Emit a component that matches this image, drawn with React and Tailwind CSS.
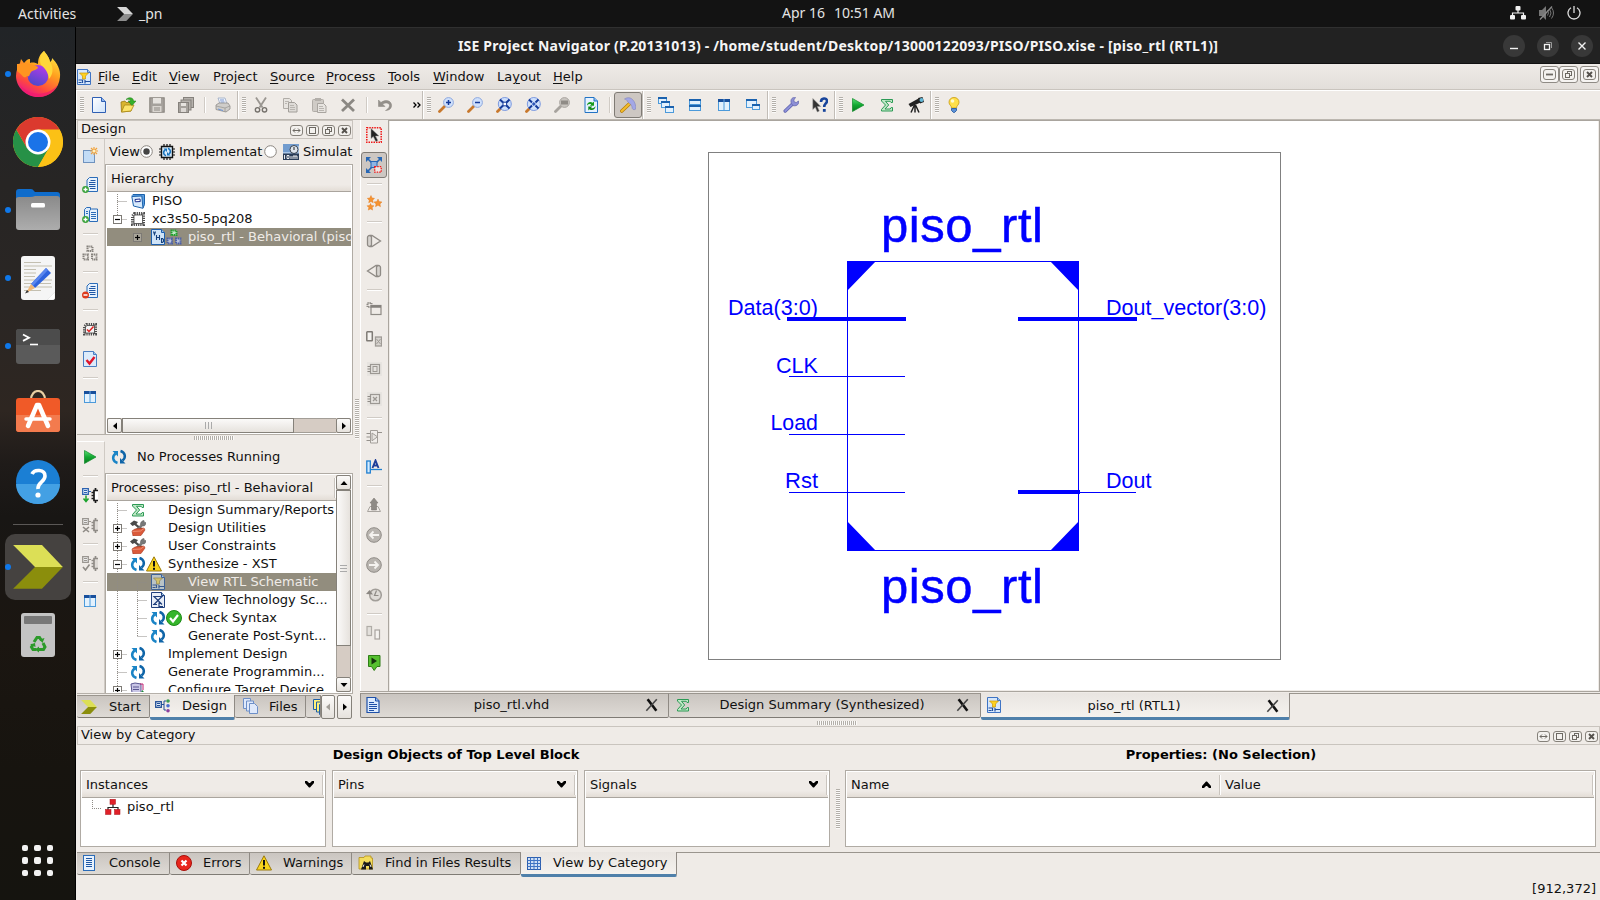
import React from "react";

/* ---------- small drawing helpers ---------- */
const I = ({ children, s = 16, className = "" }) => (
  <svg width={s} height={s} viewBox="0 0 16 16" className={"block shrink-0 " + className} fill="none">{children}</svg>
);

const Page = ({ children, stroke = "#3465a4", fill = "#dcebfb", fold = "#9ec3ea" }) => (
  <I>
    <path d="M1.5.5h10l3 3v12h-13z" fill={fill} stroke={stroke} />
    <path d="M11.5.5v3h3" fill={fold} stroke={stroke} />
    {children}
  </I>
);

const SchematicIcon = ({ dim, plain }) => (
  <Page stroke={dim ? "#3e6296" : plain ? "#1f3f7d" : "#3f74c4"} fill={dim ? "#b9c3c6" : plain ? "#e8eef8" : "#d6e7fb"}>
    {plain ? (
      <path d="M4 4.500h8l-4 4zM8 8.500l-4 4h3M8 8.500l4 4M3 12.500h4M9 10.500v4h4" stroke="#1f3f7d" strokeWidth="1.200" fill="none" />
    ) : (
      <g>
        <path d="M8 8v2.500M2.500 11h4v3M2.500 13.500h3M9 11v3.500M9 12.500h5" stroke={dim ? "#38598f" : "#1f4fa0"} strokeWidth="1.200" />
        <path d="M3.500 4h9L9.500 7v3h-3V7z" fill={dim ? "#d3c26a" : "#ffd21f"} stroke={dim ? "#8f8450" : "#c9950c"} strokeWidth=".7" />
      </g>
    )}
  </Page>
);

const NewFile = () => (
  <I><path d="M1.500.5h9l4 4v11h-13z" fill="url(#gnew)" stroke="#2f5fb3" /><path d="M10.500.5v4h4" fill="#8fb6ee" stroke="#2f5fb3" />
    <defs><linearGradient id="gnew" x1="0" y1="0" x2="1" y2="1"><stop offset="0" stopColor="#fff" /><stop offset="1" stopColor="#cfe3fb" /></linearGradient></defs></I>
);
const OpenFolder = () => (
  <I><path d="M1 5l4-1 1 1.500h5v8.500l-9.500 1z" fill="#d9b530" stroke="#9a7a12" strokeWidth=".8" /><path d="M1.500 15l3-7h9.500l-3 6z" fill="#fbe36b" stroke="#a98614" strokeWidth=".8" />
    <path d="M6 2.500C9-.5 13.500.500 13.500 4H16l-4 4.500L8 4h2.500C10.500 2.500 8.500 1.800 6 2.500z" fill="#35b02b" stroke="#1c7a16" strokeWidth=".5" /></I>
);
const Save = () => (
  <I><rect x=".8" y=".8" width="14.400" height="14.400" fill="#a5a19c" stroke="#85817c" /><rect x="4" y="1" width="8" height="5.500" fill="#e6e3df" /><rect x="3.500" y="9" width="9" height="6" fill="#d9d5d0" /><path d="M5 11h6M5 13h6" stroke="#8d8984" /></I>
);
const SaveAll = () => (
  <I><g stroke="#85817c"><rect x="5.500" y=".5" width="10" height="10" fill="#b5b1ac" /><rect x="3" y="3" width="10" height="10" fill="#b5b1ac" /><rect x=".5" y="5.500" width="10" height="10" fill="#a5a19c" /></g><rect x="3" y="6" width="5" height="3" fill="#e6e3df" /><rect x="3" y="11" width="5" height="4" fill="#dcd8d4" /></I>
);
const Printer = () => (
  <I><path d="M3 1h7l2 6H5z" fill="#eef3fb" stroke="#9aa9c4" strokeWidth=".8" /><path d="M5 3h4M5.500 5h4" stroke="#7d97d0" /><path d="M1 8l3-2h9l2 3v3l-4 3-10-2.500z" fill="#cfcdca" stroke="#8f8d8a" strokeWidth=".8" /><path d="M1 9l9 2 5-2M10 11v4" stroke="#9c9a97" strokeWidth=".8" /><path d="M3 12l5 1.500" stroke="#6f97d8" /></I>
);
const Cut = () => (
  <I><path d="M3 .5l6.500 10M13 .5L6.500 10.500" stroke="#9a9691" strokeWidth="1.800" /><circle cx="4.500" cy="12.800" r="2.200" stroke="#75716c" strokeWidth="1.400" /><circle cx="11.500" cy="12.800" r="2.200" stroke="#75716c" strokeWidth="1.400" /></I>
);
const Copy = () => (
  <I><path d="M1.500 1.500h6l2 2v8h-8z" fill="#e7e4e0" stroke="#b0aca7" /><path d="M6.500 5.500h6l2.500 2.500v7h-8.500z" fill="#dedbd7" stroke="#a29e99" /><path d="M3 4.500h4M3 6.500h2M8 8.500h4M8 10.500h5M8 12.500h5" stroke="#b9b5b0" /></I>
);
const Paste = () => (
  <I><rect x="1.500" y="2.500" width="11" height="12" rx="1" fill="#cfcbc6" stroke="#b0aca7" /><rect x="4" y="1" width="6" height="3" fill="#b3afaa" /><path d="M6.500 6.500h6l2.500 2.500v6.500h-8.500z" fill="#e7e4e0" stroke="#a9a5a0" /><path d="M8 9.500h4M8 11.500h5M8 13.500h5" stroke="#b9b5b0" /></I>
);
const Del = () => <I><path d="M2 2.500L14 14M14 2.500L2 14" stroke="#8b8883" strokeWidth="2.800" /></I>;
const Undo = () => <I><path d="M1.500 3v6.500h6.500L5.500 7C9 5 12.500 6 12.500 8.500S10 12.500 8.500 13.500c4.500 0 6.500-3 6-6C13.500 3 8 2.500 4 5.500z" fill="#94908b" stroke="#86827d" strokeWidth=".5" /></I>;

const Lens = ({ children, grey }) => (
  <I><path d="M1.500 14.500L7 9" stroke={grey ? "#a7a39e" : "#c8782c"} strokeWidth="2.800" strokeLinecap="round" /><circle cx="10.500" cy="5.500" r="4.900" fill={grey ? "#c9c5c0" : "#cfe0fb"} stroke={grey ? "#aaa6a1" : "#8fa8dc"} />{children}</I>
);
const LensFit = ({ sel }) => (
  <I><path d="M1.500 14.500l3.500-3.500" stroke="#c8782c" strokeWidth="2.800" strokeLinecap="round" /><circle cx="8.800" cy="7" r="6.500" fill="#cfe0fb" stroke="#7d9ae0" />
    <path d="M4 2.500l3 3M13.500 2.500l-3 3M4 11.500l3-3M13.500 11.500l-3-3" stroke="#143a9a" strokeWidth="2" />{sel ? <path d="M8.800 5l2 2-2 2-2-2z" fill="#2e57b8" /> : <rect x="7" y="5.200" width="3.600" height="3.600" fill="#fff" stroke="#143a9a" />}</I>
);
const Refresh = () => (
  <I><path d="M2 .5h9l3.500 3.500v11.500H2z" fill="#e6f2ff" stroke="#2273c4" /><path d="M11 .5V4h3.500" fill="#8cbcf0" stroke="#2273c4" /><path d="M4 8.500C4 5 7.500 4 9.800 5.800L11 4.600v4.200H6.800L8.200 7.400C6.800 6.700 5.500 7 4 8.500z" fill="#159a1c" /><path d="M12.500 8.500c0 3.500-3.500 4.500-5.800 2.700l-1.200 1.200V8.200" fill="none" /><path d="M12.500 9c0 4-4 5-6 3.200L5.300 13.400V9.600h4L8 10.900c1.500.8 3.200.2 4.500-1.900z" fill="#0f8a17" /></I>
);
const Hammer = () => (
  <I><path d="M1.800 14l8-7.500" stroke="#b57c0a" strokeWidth="3.600" strokeLinecap="round" /><path d="M1.800 14l8-7.500" stroke="#f2bd2c" strokeWidth="2.200" strokeLinecap="round" /><path d="M4.500 2c3-2 6-1.500 8 .5 2.500 2.500 3.500 6 3.300 9.500-1.500 1-2.800.8-3.500-.5-.3-2.500-1-4-2.800-5L7.500 4.500C7 3 6 2.500 4.500 2z" fill="#a3a7e6" stroke="#7f83bd" strokeWidth=".6" /></I>
);
const Win = ({ x, y, w, h }) => (
  <g><rect x={x + 0.5} y={y + 0.5} width={w - 1} height={h - 1} fill="#e3f1fd" stroke="#4c9ada" /><rect x={x} y={y} width={w} height="2" fill="#1b62ae" /></g>
);
const Cascade = () => <I><Win x={0} y={0} w={9} h={7} /><Win x={3} y={4} w={9} h={7} /><Win x={7} y={9} w={9} h={7} /></I>;
const TileH = () => <I><Win x={2} y={2} w={12} h={6} /><Win x={2} y={8} w={12} h={6} /></I>;
const TileV = () => (
  <I><rect x="2.500" y="2.500" width="11" height="11" fill="#e3f1fd" stroke="#4c9ada" /><path d="M8 4v10" stroke="#4c9ada" /><rect x="2" y="2" width="12" height="3" fill="#174f9c" /><path d="M8 2v3" stroke="#6fa8e0" /></I>
);
const WinPair = () => <I><Win x={1} y={2} w={11} h={9} /><Win x={7} y={7} w={8} h={6} /></I>;
const Wrench = () => <I><path d="M2.200 14l6.800-6.500" stroke="#6064ae" strokeWidth="3.400" strokeLinecap="round" /><path d="M2.200 14l6.800-6.500" stroke="#8f92da" strokeWidth="1.800" strokeLinecap="round" /><path d="M8 5c-.5-3 1.500-5 4.500-4.500L10.800 3l.5 2 2 .5L15.500 4c.8 3-1.500 5-4.500 4.800C9.500 8.800 8.200 7 8 5z" fill="#8d8fd6" stroke="#5f62a8" strokeWidth=".7" /></I>;
const HelpArrow = () => (
  <I><path d="M.8 1.500v11l2.500-2.300 2 4.800 2-1-2-4.500h3.500z" fill="#333" stroke="#999" strokeWidth=".5" /><path d="M9 5c0-4.500 6-4.500 6-1 0 2.500-2.800 2.500-2.800 6" stroke="#17449b" strokeWidth="2.600" /><rect x="10.900" y="12" width="2.800" height="2.800" fill="#17449b" /></I>
);
const Play = () => (
  <I><path d="M2.500 1.500L14 8 2.500 14.500z" fill="url(#gplay)" stroke="#0b8a26" strokeWidth=".7" /><defs><linearGradient id="gplay" x1="0" y1="0" x2="0" y2="1"><stop offset="0" stopColor="#5be074" /><stop offset=".5" stopColor="#12a832" /><stop offset="1" stopColor="#067a1d" /></linearGradient></defs></I>
);
const Sigma = () => <I><path d="M2.500 2.500h11v3h-1.500l-.8-1.200H6.500L9.700 8l-3.700 4h5.200l1-1.500h1.300v3.500h-11v-1.500L6.500 8 2.500 4z" fill="#bfe8c6" stroke="#2c9a55" /></I>;
const Telescope = () => (
  <I><path d="M.5 7l10-5.500 2 4-10 4.500z" fill="#222" /><path d="M10 1l4.500-1 1.500 5-4 1.500z" fill="#1c1c1c" /><circle cx="13.500" cy="3" r="2" fill="#63b8d8" /><path d="M6.500 8L3 15.500M7 8v7.500M7.500 8l3.500 7.500" stroke="#222" strokeWidth="1.500" /></I>
);
const Bulb = () => (
  <I><path d="M8 .5c-3 0-5 2-5 4.800C3 8 5.500 8.500 5.500 11h5C10.500 8.500 13 8 13 5.300 13 2.500 11 .5 8 .5z" fill="#ffe04a" stroke="#c89a12" strokeWidth=".8" /><circle cx="6.500" cy="4" r="1.800" fill="#fffbd0" /><path d="M5.500 11.500h5v2l-2 2h-1l-2-2z" fill="#5c90d6" stroke="#3465a4" strokeWidth="1" /></I>
);

/* side bars */
const NewSource = () => (
  <I><rect x="1.500" y="3.500" width="11" height="12" fill="#c3dcf6" stroke="#6f92be" /><path d="M12 0v8M8 4h8M9 1l6 6M15 1L9 7" stroke="#f0a23c" strokeWidth="1.200" /><circle cx="12" cy="4" r="1.500" fill="#fff1c2" /></I>
);
const DocLines = () => (
  <g><path d="M7.500.5h8v14h-10.500v-11.500z" fill="#e8f2fd" stroke="#2b6cb8" /><path d="M8.500 3.500h5M7 5.500h6.500M7 7.500h6.500M7 9.500h6.500M8 11.500h5.500" stroke="#1f57a5" /></g>
);
const Plus = () => <g><circle cx="3.500" cy="12.500" r="3.400" fill="#3aa23b" /><path d="M3.500 10.500v4M1.500 12.500h4" stroke="#fff" strokeWidth="1.300" /></g>;
const AddSource = () => <I><DocLines /><Plus /></I>;
const AddCopy = () => <I><path d="M2.500 2.500l2-2h4v13h-6z" fill="#dbeafb" stroke="#2b6cb8" /><path d="M7.500 3.500l2-1.500h6v12.500h-8z" fill="#e8f2fd" stroke="#2b6cb8" /><path d="M9 5.500h5M9 7.500h5M9 9.500h5M9 11.500h5M4 4.500h2M4 6.500h2" stroke="#2b6cb8" /><Plus /></I>;
const RemoveDoc = () => <I><DocLines /><circle cx="3.500" cy="12" r="3.500" fill="#dd3a1c" /><path d="M1.500 12h4" stroke="#fff" strokeWidth="1.500" /></I>;
const Chips = ({ top = "#85817c", low = "#85817c", fillTop = "none", fillLow = "none" }) => (
  <I><g strokeWidth="2" strokeDasharray="1.200 .6"><rect x="5.500" y="1.500" width="5" height="4.500" stroke={top} fill={fillTop} /><rect x="1.500" y="9.500" width="4.500" height="5" stroke={low} fill={fillLow} /><rect x="10" y="9.500" width="4.500" height="5" stroke={low} fill={fillLow} /></g></I>
);
const ChipCheck = () => <I><path d="M4.500 3.500h9v9.500h-11V5.500z" fill="#e8e5e1" stroke="#4c4c4c" strokeWidth="3" strokeDasharray="1.200 1" /><path d="M5 4.500h7.500V12H3.500V6z" fill="#f4f4f4" stroke="#444" strokeWidth=".8" /><path d="M5 8.500l2 2 4.500-5" stroke="#e02020" strokeWidth="1.500" /></I>;
const PageCheck = () => <Page stroke="#4a7ec2"><path d="M4.500 9l3 3.500L12.500 6" stroke="#e0152b" strokeWidth="2.400" /></Page>;
const ProcChip = ({ mark, grey }) => {
  const a = grey ? "#9a9691" : "#2c62b0", b = grey ? "#8f8b86" : "#1c1c1c";
  return <I><path d="M.7 1.700h5.600v5.600H.7z" stroke={a} strokeWidth="1.300" fill={grey ? "#eee" : "#e8f2fd"} /><path d="M2 3.500h3M2 5.500h3M6.500 4.500H9" stroke={a} /><path d="M12.500 4h3.500v9h-3.500z" fill={grey ? "#dedad6" : "#fff"} /><path d="M16 3.500h-4v10h4M13.500 1v2M13.500 14v2M12 5.500H9.500M12 8.500H9.500M12 11.500H9.500" stroke={b} strokeWidth="1.700" />
    {mark === "down" && <path d="M4 8.500v6M1.500 11.500L4 14.500l2.500-3" stroke="#1ba32c" strokeWidth="1.500" />}
    {mark === "x" && <path d="M1 10l6 5M7 10l-6 5" stroke="#8f8b86" strokeWidth="1.600" />}
    {mark === "v" && <path d="M1 12l2.500 3L7.500 9.500" stroke="#8f8b86" strokeWidth="1.600" />}</I>;
};
const PointerSel = () => <I><rect x=".8" y=".8" width="14.400" height="14.400" stroke="#f01818" strokeWidth="1.500" strokeDasharray="1.500 1" /><path d="M5 1.500v10l2.300-2 2.500 5 2-1L9.500 9h3.500z" fill="#222" stroke="#999" strokeWidth=".5" /></I>;
const ZoomBox = () => <I><path d="M2 2l12 12M14 2L2 14" stroke="#2767b5" strokeWidth="1.600" /><path d="M0 0h5L0 5zM16 0h-5l5 5zM0 16h5l-5-5z" fill="#2767b5" /><rect x="5" y="4.500" width="6" height="6" fill="#8db4e4" stroke="#2767b5" /><rect x="8.700" y="9.700" width="6.500" height="5.500" fill="#efe7e4" stroke="#f01818" strokeWidth="1.300" strokeDasharray="1.500 1" /></I>;
const Stars = () => <I><g fill="#f59331" stroke="#e07414" strokeWidth=".4"><path d="M5 .5l1 2.500 2.500.3L6.700 5.200l.5 2.600L5 6.500 2.700 7.800l.5-2.600L1.300 3.300 3.800 3z" /><path d="M12 4l1.200 2.600 2.800.3-2 2 .5 2.800-2.500-1.400-2.500 1.400.5-2.800-2-2 2.800-.3z" /><path d="M4.500 8.500l1 2 2.500.3-1.800 1.800.4 2.500-2.100-1.200-2.200 1.200.5-2.500L1 10.800l2.500-.3z" /></g></I>;
const Cone = ({ flip }) => <I className={flip ? "-scale-x-100" : ""}><rect x="1.500" y="2.500" width="4" height="11" rx="2" fill="#d6d3cf" stroke="#8f8b86" strokeWidth="1.300" /><path d="M4 2.500h2L14.500 8 6 13.500H4" stroke="#8f8b86" strokeWidth="1.300" /></I>;
const GWin = () => <I><path d="M1.500 2h4v4h-4z" stroke="#8f8b86" strokeDasharray="1.200 .8" strokeWidth="2" /><rect x="5" y="4.500" width="10" height="9" fill="#efebe7" stroke="#8f8b86" strokeWidth="1.200" /><path d="M5 5.500h10" stroke="#85817c" strokeWidth="2.500" /></I>;
const GPair = () => <I><rect x=".8" y=".8" width="5.500" height="9" rx=".5" fill="#f5f3f0" stroke="#7f7b76" strokeWidth="1.500" /><rect x="9.500" y="6" width="6" height="9" fill="#d8d4d0" stroke="#9f9b96" strokeWidth="1.300" /><path d="M10.500 8l4 5M14.500 8l-4 5" stroke="#9f9b96" /></I>;
const GChip = ({ x }) => <I><rect x="1" y="1" width="15" height="14" fill="#e7e4e0" /><rect x="4.500" y="3.500" width="9" height="9" stroke="#9c9893" strokeWidth="1.200" /><path d="M1.500 5.500h3M1.500 8h3M1.500 10.500h3" stroke="#8f8b86" />{x ? <path d="M7 6l4 4M11 6l-4 4" stroke="#9c9893" strokeWidth="1.300" /> : <rect x="7" y="5.500" width="4" height="5" stroke="#9c9893" />}</I>;
const GGate = () => <I><path d="M4.500 1.500h7v12.500h-7z" stroke="#a29e99" fill="#f1eeeb" /><path d="M6 4l5.500 3.800-5.500 4z" stroke="#a29e99" fill="#e6e3df" /><path d="M.5 4.500h3.500M.5 8h3.500M.5 11.500h3.500M11.500 3.500H16" stroke="#95918c" strokeWidth="1.200" /></I>;
const AFrame = () => <I><rect x=".8" y="2" width="3.500" height="12" fill="#d5ecff" stroke="#1f7fd0" strokeWidth="1.300" /><path d="M4.500 10.500H16" stroke="#1f7fd0" strokeWidth="1.300" /><path d="M6.500 9L9.500 1.500 12.500 9M7.500 6.500h4" stroke="#1f3f99" strokeWidth="1.900" /></I>;
const GUp = () => <I><path d="M4 9.500l-2.500 5h13l-2.500-5z" stroke="#a8a49f" /><path d="M8 1l4 5h-1.500v7h-5V6H4z" fill="#8f8b86" stroke="#7f7b76" strokeWidth=".6" /></I>;
const GArrow = ({ flip }) => <I className={flip ? "-scale-x-100" : ""}><circle cx="8" cy="8" r="7.300" fill="#b9b5b0" stroke="#8f8b86" /><path d="M13 8H4M7.500 4.500L4 8l3.500 3.500" stroke="#f5f3f0" strokeWidth="1.800" /></I>;
const GHist = () => <I><circle cx="9.500" cy="8" r="5.800" fill="#dedbd7" stroke="#a29e99" strokeWidth="1.500" /><path d="M10.500 3.500L8.500 8.500h4" stroke="#8f8b86" strokeWidth="1.200" /><path d="M0 7l3.500-4L7 7.500z" fill="#8b8782" /></I>;
const GTwo = () => <I><rect x="1" y="1.500" width="4.500" height="9" fill="#e3e0dc" stroke="#b0aca7" strokeWidth="1.200" /><rect x="9" y="5" width="4.500" height="9" fill="#f5f3f0" stroke="#a8a49f" strokeWidth="1.200" /></I>;
const GreenTag = () => <I><path d="M2.500.5h11.500v11h-3l-2.800 4-2.700-4h-3z" fill="#56c02f" stroke="#2f7d17" /><path d="M5.500 2.500v7L11 6z" fill="#15330d" /></I>;

/* tree icons */
const Cycle = () => (
  <I><path d="M6.500 14C1.500 12.500.8 7.500 4.500 4.500" stroke="#1a84c6" strokeWidth="2.500" /><path d="M1.500 2H7v5.500z" fill="#1a84c6" /><path d="M9.500 2C14.500 3.500 15.200 8.500 11.500 11.500" stroke="#0f65a8" strokeWidth="2.500" /><path d="M14.500 14.500H9V9z" fill="#0f65a8" /></I>
);
const Tools = () => <I><path d="M0 3.500L4 .5l4 1.500-1.500 2L13 9l-2 1.500L4.500 5 2.500 6z" fill="#4a4a4a" /><path d="M14 .5l.5 2h1.500c0 3-2 4-3.500 3.500L6 13l-2-2 6.500-6C10 3 11.500.5 14 .5z" fill="#777" stroke="#555" strokeWidth=".4" /><path d="M2 11l3-2 9-1 1 2-4 5.500-8 .5z" fill="#db5a3a" stroke="#a8361c" strokeWidth=".6" /><path d="M2.500 11.500l8-.5 3.500-2.500" stroke="#f09a80" strokeWidth=".8" /></I>;
const Warn = () => <I><path d="M8 .8L15.500 15H.5z" fill="#f9d31c" stroke="#9c7a0a" strokeLinejoin="round" /><path d="M8 5v5.500" stroke="#111" strokeWidth="2" /><rect x="7" y="11.800" width="2" height="2" fill="#111" /></I>;
const Ok = () => <I><circle cx="8" cy="8" r="7.500" fill="#35b52c" stroke="#1d8a17" /><path d="M4 8l3 3.500L12 5" stroke="#fff" strokeWidth="2.200" /></I>;
const Project = () => <I><path d="M2 2.500l1-1h11.500v10l-1.500 3.500" fill="#5a9de0" stroke="#1c62ab" /><path d="M1.800 3.500l10-.5 1.200 12.300-9.500-2.300z" fill="#d7eafc" stroke="#1c62ab" /><path d="M5 6.500l5-.5.3 2.500-5 .3z" fill="#fff" stroke="#1c2f8d" /></I>;
const ChipSm = () => <I><path d="M4.500 2.500h9v11h-11V5z" fill="#eee" stroke="#4c4c4c" strokeWidth="3" strokeDasharray="1.200 1" /><path d="M5 4h7.500v8.500H4V5.500z" fill="#fff" stroke="#444" strokeWidth=".8" /></I>;
const Vhd = () => <Page stroke="#1d5fae" fill="#cfe3f7"><path d="M3.500 2.500l1 3 1-3M6.500 6v5M9.500 6v5M6.500 8.500h3M11.500 9.500v4h1l1-1v-2l-1-1z" stroke="#15407c" strokeWidth="1.100" /></Page>;
const ConfDev = () => <I><path d="M1 2l4-1 6 1v9l-5 2-4-2z" fill="#c9c6e6" stroke="#5a5791" /><path d="M3 5h6M3 7.500h6" stroke="#5a5791" /><path d="M10 2h3v6" stroke="#c02070" /><path d="M12.500 8L16 13h-7z" fill="#1c8a3a" /></I>;
const ChipBlue = () => <I><path d="M2.500 2.500h11v11h-11z" fill="#d9ecfb" stroke="#111" strokeWidth="1.400" /><path d="M5 0v2M8 0v2M11 0v2M5 14v2M8 14v2M11 14v2M0 5h2M0 8h2M0 11h2M14 5h2M14 8h2M14 11h2" stroke="#111" strokeWidth="1.200" /><path d="M7 11.800C4 10.500 4 7.500 6 6M9 4.200c3 1.300 3 4.300 1 5.800" stroke="#1a74bd" strokeWidth="1.600" /><path d="M4.500 4.500h3.500v3.500zM11.500 11.500H8V8z" fill="#1a74bd" /></I>;
const SimIcon = () => (
  <svg width="16" height="16" viewBox="0 0 16 16" className="block shrink-0"><rect width="16" height="16" fill="#a9c6e8" /><path d="M0 1h16M0 3h8M0 5h8M0 7h8" stroke="#3a72b5" /><circle cx="11" cy="5.500" r="4" fill="#dfe6ee" stroke="#39424d" /><path d="M11 3v3" stroke="#222" /><rect y="9.500" width="16" height="6.500" fill="#2a3d58" /><path d="M1.500 11v4M4 11.500h2v3H4zM8 12v3M10 15v-3h2v3M12 12h2v3" stroke="#fff" fill="none" strokeWidth=".9" /></svg>
);
const Arrow3D = ({ s = 16, grey }) => (
  <svg width={s} height={s * 0.875} viewBox="0 0 50 44" className="block shrink-0"><path d="M0 0h29l21 22H22z" fill={grey ? "#d6d6d6" : "#dcdf56"} /><path d="M0 44h29l21-22H22z" fill={grey ? "#8d8d8d" : "#8b8e0c"} /></svg>
);
const DesignTab = () => <I><rect x=".7" y="3.700" width="5.600" height="5.600" fill="#e3eefb" stroke="#234f96" strokeWidth="1.300" /><path d="M2 5.500h3M2 7.500h3M6 6.500h3M9 3v9M9 3h2M9 12h2" stroke="#234f96" /><circle cx="13" cy="3" r="1.800" fill="#3c9a52" /><circle cx="13" cy="7.800" r="1.800" fill="#4a6fd0" /><circle cx="13" cy="12.700" r="1.800" fill="#8b3f9d" /></I>;
const FilesIcon = ({ y }) => <I><g fill={y ? "#fff27a" : "#dfe9fb"} stroke={y ? "#1f5fa8" : "#6d8fc8"}><path d="M.5.500h7v10h-7z" /><path d="M3.500 3h7v10h-7z" /><path d="M6.500 5.500h5l3 3v7h-8z" /></g></I>;
const DocIcon = () => <I><path d="M2 .5h8.500l3.500 3.500v11.500H2z" fill="#dcebfd" stroke="#1f50a8" strokeWidth="1.200" /><path d="M10.500.5V4H14" fill="#9fc0f0" stroke="#1f50a8" /><path d="M4 5.500h5M4 7.500h8M4 9.500h8M4 11.500h8M4 13.500h5" stroke="#1f50a8" /></I>;
const ConsoleIcon = () => <I><rect x="2.500" y=".5" width="11" height="15" fill="#e8f2fd" stroke="#2b6cb8" /><path d="M5 3.500h6M5 5.500h6M5 7.500h6M5 9.500h6M5 11.500h6" stroke="#1d57a5" /></I>;
const ErrIcon = () => <I><circle cx="8" cy="8" r="7.500" fill="#e8261c" stroke="#a80f0a" /><path d="M5.500 5.500l5 5M10.500 5.500l-5 5" stroke="#fff" strokeWidth="2.200" /></I>;
const FindIcon = () => <I><path d="M1 2.500h5l1-1.500h6v2h1.500v11H1z" fill="#f3dc5c" stroke="#b4901a" strokeWidth=".8" /><path d="M3 14.500l3-8.500 2 1.500h2.500L12 6l3 8.500h-4V11H8v3.500z" fill="#1a1a1a" /><path d="M5 12l1-2.500M13 12l-1-2.500" stroke="#eee" /></I>;
const GridIcon = () => <I><rect x="1.500" y="2.500" width="13" height="12" fill="#cfe0f6" stroke="#2e5fae" /><path d="M1.500 5.500h13M1.500 8.500h13M1.500 11.500h13M4.500 2.500v12M8 2.500v12M11.500 2.500v12" stroke="#3f74c4" /></I>;
const RedTree = () => <I><path d="M8 5v4M3 11V8.500h10V11" stroke="#222" strokeWidth="1.200" /><g fill="#e02028" stroke="#a80f16" strokeWidth=".5"><rect x="5" y=".3" width="5.500" height="5" /><rect x=".5" y="10.500" width="5.500" height="5" /><rect x="9.500" y="10.500" width="5.500" height="5" /></g></I>;

/* ---------- small widgets ---------- */
const Grip = () => <div className="h-[16px] w-[4px] shrink-0 bg-[repeating-linear-gradient(180deg,#b3afa9_0_1px,#fbfaf9_1px_2px)]" />;
const Btn = ({ children }) => <div className="flex w-[29px] shrink-0 items-center justify-center">{children}</div>;
const Sep = () => <div className="flex w-[8px] shrink-0 items-center justify-center"><div className="h-[16px] w-[2px] border-l border-[#d0cbc5] bg-white" /></div>;
const Bar = ({ children, className = "" }) => (
  <div className={"flex shrink-0 items-center border-l border-white pl-[3px] " + className}>
    <Grip />
    <div className="flex h-full min-w-0 flex-1 items-center border-r border-[#c2bdb7] pl-[0.5px]">{children}</div>
  </div>
);
const ToolCol = ({ items, className = "" }) => (
  <div className={"flex flex-col items-center " + className}>
    {items.map((it, i) =>
      it === "-" ? (
        <div key={i} className="flex h-[8px] w-full shrink-0 items-center justify-center"><div className="h-[2px] w-[15px] border-t border-[#d0cbc5] bg-white" /></div>
      ) : (
        <div key={i} className="flex h-[30px] w-full shrink-0 items-center justify-center">{it}</div>
      )
    )}
  </div>
);

const MiniGlyph = ({ k, c = "#6d6963" }) => {
  if (k === "swap") return <path d="M3 5.500h7M5 3.500l-2 2 2 2M8 3.500l2 2-2 2" stroke={c} />;
  if (k === "max") return <rect x="3.500" y="2.500" width="6" height="6" stroke={c} />;
  if (k === "restore") return <g stroke={c}><rect x="5.500" y="2.500" width="4" height="4" /><rect x="3.500" y="4.500" width="4" height="4" fill="#f3f1ee" /></g>;
  if (k === "min") return <path d="M3 5.500h7" stroke={c} strokeWidth="1.800" />;
  return <path d="M4 3l5 5M9 3L4 8" stroke="#55514c" strokeWidth="1.900" />;
};
const Mini = ({ k }) => (
  <svg width="13" height="11" viewBox="0 0 13 11" fill="none" className="block"><rect x=".5" y=".5" width="12" height="10" rx="2.500" fill="#f3f1ee" stroke="#85817a" /><MiniGlyph k={k} /></svg>
);
const MiniSet = () => <div className="flex gap-[3px]">{["swap", "max", "restore", "x"].map((k) => <Mini key={k} k={k} />)}</div>;
const MdiBtn = ({ k }) => (
  <div className="flex h-[17px] w-[19px] items-center justify-center rounded-[3px] border border-[#8f8b85] bg-[#f6f4f2]"><Mini k={k} /></div>
);

const Radio = ({ on }) => (
  <svg width="13" height="13" viewBox="0 0 13 13" className="block shrink-0"><circle cx="6.500" cy="6.500" r="5.800" fill="#fff" stroke="#8b8680" />{on && <circle cx="6.500" cy="6.500" r="3.200" fill="#444" />}</svg>
);

const Guide = ({ w, kind, level, last, first }) => {
  const dot = { stroke: "#8f8b86", strokeDasharray: "1 1" };
  const cx = level ? 30.500 : 10.500;
  return (
    <svg width={w} height="18" viewBox={`0 0 ${w} 18`} className="block shrink-0" fill="none">
      {level === 1 && !last?.includes("root") && <path d="M10.500 0v18" {...dot} />}
      <path d={`M${cx} ${first ? 2 : 0}V${last?.includes("self") ? 9 : 18}`} {...dot} />
      <path d={`M${cx} 9.500h9`} {...dot} />
      {kind && <g><rect x={cx - 4} y="5.500" width="8" height="8" fill={level ? "#a9a599" : "#fff"} stroke="#7d7a75" /><path d={`M${cx - 2.500} 9.500h5`} stroke="#000" strokeWidth="1.200" />{kind === "+" && <path d={`M${cx} 7v5`} stroke="#000" strokeWidth="1.200" />}</g>}
    </svg>
  );
};
const Row = ({ level = 0, kind, a, b, text, sel, last, first, tight }) => (
  <div className={"flex h-[18px] shrink-0 items-center whitespace-nowrap " + (sel ? "bg-[#928d7e] text-[#efebe7]" : "")}>
    <Guide w={level ? 43 : 23} kind={kind} level={level} last={last} first={first} />
    {a}
    <div className={tight ? "w-0" : "w-[16px] shrink-0"}>{!tight && b}</div>
    <span className="pl-[6px] leading-[18px]">{text}</span>
  </div>
);

const header = "bg-[linear-gradient(180deg,#efebe7_0%,#efebe7_75%,#e3ddd6_100%)] border-b border-[#aaa59e]";
const frame = "border border-[#b0aba4] p-px bg-white";
const HDiv = () => <div className="h-[20px] w-[2px] border-l border-[#c9c4be] bg-white" />;
const Caret = ({ up }) => (
  <svg width="9" height="7" viewBox="0 0 9 7" className={"block " + (up ? "-scale-y-100" : "")}><path d="M0 0h2.500v1h1v1h2V1h1V0H9v2L5 6.500H4L0 2z" fill="#000" /></svg>
);
const Table = ({ title, children }) => (
  <div className={"flex h-[77px] w-[246px] shrink-0 flex-col " + frame}>
    <div className={"flex h-[26px] items-center justify-between pl-[4px] " + header}>
      <span className="leading-[25px]">{title}</span>
      <div className="flex items-center gap-[8px]"><Caret /><HDiv /></div>
    </div>
    {children}
  </div>
);

const tabOff = "bg-[linear-gradient(180deg,#cac5c0,#dedad5)] border-t border-t-[#9a958e] border-b border-b-[#7f7b75] border-r border-r-[#8f8a84] rounded-b-[2px]";
const tabOn = "bg-[linear-gradient(180deg,#e9e5e1,#f5f2ee)] border-b-[3px] border-b-[#4f80aa] border-r border-r-[#8f8a84] rounded-b-[2px]";

const ArrowBtn = ({ dir, grey, className = "" }) => {
  const d = { left: "M9 3.500v7L5 7z", right: "M5 3.500v7L9 7z", up: "M3.500 9h7L7 5z", down: "M3.500 5h7L7 9z" }[dir];
  return <div className={"flex shrink-0 items-center justify-center rounded-[2px] border border-[#85817a] bg-[linear-gradient(180deg,#fbfaf9,#e6e2dd)] " + className}><svg width="14" height="14" viewBox="0 0 14 14" className="block shrink-0"><path d={d} fill={grey ? "#a39f99" : "#000"} /></svg></div>;
};

const CloseX = () => <I s={14}><path d="M3 1.500l10 13" stroke="#111" strokeWidth="3" /><path d="M13.500 1.500L1.500 14.500" stroke="#444" strokeWidth="1.800" /></I>;

/* ---------- dock ---------- */
const Firefox = () => (
  <svg width="46" height="46" viewBox="0 0 46 46">
    <defs>
      <linearGradient id="ff1" x1=".8" y1="0" x2=".3" y2="1"><stop offset="0" stopColor="#fff04a" /><stop offset=".4" stopColor="#ffa01e" /><stop offset=".75" stopColor="#ff4a3d" /><stop offset="1" stopColor="#e8128f" /></linearGradient>
      <linearGradient id="ff2" x1=".7" y1="0" x2=".3" y2="1"><stop offset="0" stopColor="#b43bea" /><stop offset="1" stopColor="#4a49c8" /></linearGradient>
    </defs>
    <path d="M29 0c3 4 5 6 6 11 2-1 2-3 2-4 5 5 9 12 8 19-1 12-10 20-22 20S1 36 1 25c0-5 2-10 4-13l1-4 3 4c2-2 3-4 6-4v4c3-1 6 0 8 1 0-6 2-10 6-13z" fill="url(#ff1)" />
    <circle cx="23" cy="24.500" r="10.500" fill="url(#ff2)" />
    <path d="M2 13c6 0 12-2 21 3 0 3-5 3-7 5-2 3-1 5-4 4-3 4-5-2-10-5z" fill="#ff9520" />
    <path d="M29 0c3 4 5 6 6 11 4 5 3 13-1 17-1-7-4-11-8-14-2-5-1-10 3-14z" fill="#ffd83a" />
    <path d="M5 34c9 11 27 12 38 0-4 8-11 12-20 12S8 41 5 34z" fill="#f01c6c" opacity=".75" />
  </svg>
);
const Chrome = () => (
  <svg width="50" height="50" viewBox="0 0 50 50">
    <circle cx="25" cy="25" r="25" fill="#fbc116" />
    <path d="M3.300 12.500A25 25 0 0 0 25 50L36 31 25 25 14 31z" fill="#269147" />
    <path d="M25 12.500h21.700A25 25 0 0 1 25 50L36 31z" fill="#fbc116" />
    <path d="M3.300 12.500A25 25 0 0 1 46.700 12.500H25L14 31z" fill="#db3a2e" />
    <circle cx="25" cy="25" r="12.500" fill="#fff" /><circle cx="25" cy="25" r="10" fill="#1a73e8" />
  </svg>
);
const Files = () => (
  <svg width="44" height="42" viewBox="0 0 44 42"><path d="M0 10V3q0-3 3-3h12q2 0 3 2l1 1h22q3 0 3 3v8z" fill="#0f6ccb" /><path d="M0 10q0-2 3-2h11q3 0 5-1h22q3 0 3 3v28q0 3-3 3H3q-3 0-3-3z" fill="url(#fg)" /><rect x="15" y="14" width="14" height="4.500" rx="1.500" fill="#fff" /><defs><linearGradient id="fg" x1="0" y1="0" x2="0" y2="1"><stop offset="0" stopColor="#8a8a8a" /><stop offset="1" stopColor="#adadad" /></linearGradient></defs></svg>
);
const Editor = () => (
  <svg width="34" height="44" viewBox="0 0 34 44"><rect width="34" height="44" rx="3" fill="#f5f5f5" /><path d="M3 6.500h17M3 10h28M3 13.500h12M3 17h12M3 20.500h11M3 24h28M3 27.500h27M3 31h28M3 34.500h17" stroke="#c3bfb0" strokeWidth="1.200" /><path d="M10 28L25 12l5 5-16 15z" fill="#2f63dd" /><path d="M10 28L25 12l2 2-15 16z" fill="#5a86ee" /><path d="M10 28l4 4-9 5z" fill="#f0b878" /><path d="M6 34l2 2-4 1.500z" fill="#333" /><path d="M26 44l8-8v5q0 3-3 3z" fill="#fff" stroke="#ddd" strokeWidth=".5" /></svg>
);
const Term = () => (
  <svg width="44" height="35" viewBox="0 0 44 35"><rect width="44" height="35" rx="3" fill="#5a5a5a" /><path d="M0 16V3q0-3 3-3h38q3 0 3 3v13z" fill="#4c4c4c" /><path d="M7 5.500l6 3.200-6 3.200" stroke="#fff" strokeWidth="1.800" fill="none" /><path d="M14 15.500h8" stroke="#fff" strokeWidth="1.600" /></svg>
);
const Software = () => (
  <svg width="44" height="42" viewBox="0 0 44 42"><path d="M15 10C15-2 29-2 29 10" stroke="#e9cfa3" strokeWidth="2.200" fill="none" /><rect y="8" width="44" height="34" rx="3" fill="#f05a28" /><path d="M0 25h44v14q0 3-3 3H3q-3 0-3-3z" fill="#f37b4e" /><path d="M12 36L21 15h2l9 21" stroke="#fff" strokeWidth="4.500" fill="none" strokeLinejoin="round" strokeLinecap="round" /><path d="M10 29h24" stroke="#fff" strokeWidth="3.500" strokeLinecap="round" /></svg>
);
const HelpDock = () => (
  <svg width="44" height="44" viewBox="0 0 44 44"><circle cx="22" cy="22" r="22" fill="#1b7fd4" /><path d="M0 24a22 20 0 0 0 44 0z" fill="#43a0e4" /><path d="M16 14c2-5 13-5 13 2 0 6-7.500 6-7 13" stroke="#fff" strokeWidth="3.600" fill="none" /><circle cx="22" cy="35" r="2.600" fill="#fff" /></svg>
);
const Trash = () => (
  <svg width="34" height="44" viewBox="0 0 34 44"><rect width="34" height="44" rx="3" fill="#c4c4c4" /><rect x="3" y="3" width="28" height="8" rx="1" fill="#787878" /><g stroke="#2c9a2a" strokeWidth="3" fill="none"><path d="M13 29l3-4.500h2.500l2 3" /><path d="M22 30l2 4-1.500 2.500H18" /><path d="M15.500 36.500H12L10.500 34l1.500-2.500" /></g><path d="M21.500 30l2-5-5 1.500zM18 33.500v6l-4-3zM9 31.500l5-1.500.5 4z" fill="#2c9a2a" /></svg>
);
const AppsGrid = () => (
  <div className="grid grid-cols-3 gap-[6px]">{Array.from({ length: 9 }, (_, i) => <div key={i} className="h-[6.500px] w-[6.500px] rounded-[2px] bg-[#f2f2f2]" />)}</div>
);
const DockItem = ({ children, run, active }) => (
  <div className="flex h-[68px] shrink-0 items-center">
    <div className="flex w-[5px] shrink-0" />
    <div className={"flex h-[66px] w-[66px] shrink-0 items-center rounded-[10px] " + (active ? "bg-[#454240]" : "")}>
      <div className={"-mr-[6px] h-[6px] w-[6px] shrink-0 rounded-full " + (run ? "bg-[#0f78ea]" : "")} />
      <div className="flex flex-1 justify-center">{children}</div>
    </div>
  </div>
);

/* ---------- schematic ---------- */
const Schematic = () => (
  <svg width="1208" height="569" viewBox="390 121 1208 569" className="block" fontFamily="'Liberation Sans', Arial, sans-serif">
    <rect x="708.500" y="152.500" width="572" height="507" fill="none" stroke="#808080" />
    <g fill="none" stroke="#0000ff" shapeRendering="crispEdges">
      <rect x="847.500" y="261.500" width="231" height="289" />
      <path d="M789 376.500h116M789 434.500h116M789 492.500h116M1079 492.500h57" />
      <path d="M787 319h119M1018 319h119M1018 492h62" strokeWidth="4" />
    </g>
    <g fill="#0000ff">
      <path d="M847 261h29l-29 30zM1079 261h-29l29 30zM847 551h29l-29-30zM1079 551h-29l29-30z" />
      <g fontSize="49" stroke="#0000ff" strokeWidth=".5"><text x="881" y="242" textLength="162">piso_rtl</text><text x="881" y="603" textLength="162">piso_rtl</text></g>
      <g fontSize="22" lengthAdjust="spacingAndGlyphs">
        <text x="728" y="315" textLength="90" lengthAdjust="spacingAndGlyphs">Data(3:0)</text>
        <text x="776" y="373" textLength="42" lengthAdjust="spacingAndGlyphs">CLK</text>
        <text x="770.500" y="430" textLength="47.500" lengthAdjust="spacingAndGlyphs">Load</text>
        <text x="785" y="488" textLength="33" lengthAdjust="spacingAndGlyphs">Rst</text>
        <text x="1106" y="315" textLength="160.500" lengthAdjust="spacingAndGlyphs">Dout_vector(3:0)</text>
        <text x="1106" y="488" textLength="45.500" lengthAdjust="spacingAndGlyphs">Dout</text>
      </g>
    </g>
  </svg>
);

const menus = [["", "F", "ile", "w-[34px]"], ["", "E", "dit", "w-[37px]"], ["", "V", "iew", "w-[44px]"], ["P", "r", "oject", "w-[57px]"], ["", "S", "ource", "w-[56px]"], ["", "P", "rocess", "w-[62px]"], ["", "T", "ools", "w-[45px]"], ["", "W", "indow", "w-[64px]"], ["La", "y", "out", "w-[56px]"], ["", "H", "elp", "w-[50px]"]];

export default function App() {
  return (
    <div className="flex h-[900px] w-[1600px] flex-col overflow-hidden bg-[#efebe7] font-['DejaVu_Sans',sans-serif] text-[13px] text-[#111]">
      {/* desktop bar */}
      <div className="grid h-[27px] shrink-0 grid-cols-[1fr_auto_1fr] items-center bg-[#131313] font-['Noto_Sans',sans-serif] text-[#e4e4e4]">
        <div className="flex items-center">
          <span className="w-[98px] pl-[18px] text-[14px] leading-[27px]">Activities</span>
          <span className="flex w-[41px] justify-start pl-[19px]"><Arrow3D s={16} grey /></span>
          <span className="text-[14px] leading-[27px]">_pn</span>
        </div>
        <div className="-mt-px flex gap-[9px] pl-[77px] text-[14px] leading-[26px]"><span>Apr 16</span><span>10:51 AM</span></div>
        <div className="-mt-px flex items-center justify-end gap-[13px] pr-[19px]">
          <svg width="16" height="14" viewBox="0 0 16 14" fill="#f2f2f2"><rect x="5.500" width="5" height="4.500" rx="1" /><rect y="9" width="5" height="4.500" rx="1" /><rect x="11" y="9" width="5" height="4.500" rx="1" /><path d="M8 4v3M2.500 9V7h11v2" stroke="#f2f2f2" fill="none" strokeWidth="1.200" /></svg>
          <svg width="15" height="14" viewBox="0 0 15 14" fill="#767676"><path d="M0 4h3l4-4v14l-4-4H0z" /><path d="M8.500 4.500q2 2.500 0 5M10.500 3q3 4 0 8M12.500 1.500q4 5.500 0 11" stroke="#767676" fill="none" /><path d="M13 .5L1 13.500" stroke="#8a8a8a" strokeWidth="1.300" /></svg>
          <svg width="14" height="14" viewBox="0 0 14 14" fill="none" stroke="#dedede" strokeWidth="1.300"><path d="M4 1.800a6 6 0 1 0 6 0M7 0v7" /></svg>
        </div>
      </div>

      <div className="flex h-[873px] shrink-0">
        {/* dock */}
        <div className="flex w-[76px] shrink-0 flex-col border-r border-black bg-[linear-gradient(180deg,#212427_0%,#272524_18%,#2a2624_32%,#2e2621_44%,#1f1b19_50%,#181614_56%,#1b1611_70%,#17140f_85%,#15140f_100%)] pt-[13px]">
          <DockItem run><Firefox /></DockItem>
          <DockItem><Chrome /></DockItem>
          <DockItem run><Files /></DockItem>
          <DockItem run><Editor /></DockItem>
          <DockItem run><Term /></DockItem>
          <DockItem><div className="-mt-[6px]"><Software /></div></DockItem>
          <DockItem><HelpDock /></DockItem>
          <div className="flex h-[17px] shrink-0 items-center pl-[13px]"><div className="h-px w-[50px] bg-[#5b5856]" /></div>
          <DockItem run active><Arrow3D s={50} /></DockItem>
          <DockItem><Trash /></DockItem>
          <div className="flex-1" />
          <div className="mb-[24px] flex justify-center"><AppsGrid /></div>
        </div>

        {/* window */}
        <div className="flex w-[1524px] flex-col">
          <div className="grid h-[37px] shrink-0 grid-cols-[1fr_auto_1fr] items-center border-b border-t border-b-[#111] border-t-[#303030] bg-[#222222] font-['Noto_Sans',sans-serif] text-[14px] font-bold text-[#f5f5f5]">
            <div />
            <span className="w-[762px] whitespace-nowrap text-center leading-[35px] tracking-[0.21px]">ISE Project Navigator (P.20131013) - /home/student/Desktop/13000122093/PISO/PISO.xise - [piso_rtl (RTL1)]</span>
            <div className="flex justify-end gap-[12px] pr-[7px]">
              {["M7 13.500h8", "r", "M7.500 7.500l7 7M14.500 7.500l-7 7"].map((d) => (
                <svg key={d} width="22" height="22" viewBox="0 0 22 22" fill="none" stroke="#f2f2f2"><circle cx="11" cy="11" r="11" fill="#383838" stroke="none" />{d === "r" ? <g><path d="M9 7.500h5.500V13" stroke="#9a9a9a" /><rect x="7.500" y="9.500" width="5" height="5" strokeWidth="1.300" /></g> : <path d={d} strokeWidth="1.400" />}</svg>
              ))}
            </div>
          </div>

          {/* menu bar */}
          <div className="flex h-[26px] shrink-0 items-center border-b border-[#c9c4be] bg-[linear-gradient(180deg,#efebe7,#e2deda)]">
            <div className="flex w-[22px]"><SchematicIcon /></div>
            {menus.map(([a, u, b, w]) => (
              <span key={u + b} className={"pt-px leading-[26px] " + w}>{a}<span className="underline decoration-1 underline-offset-[2px]">{u}</span>{b}</span>
            ))}
            <div className="flex flex-1 justify-end pr-px -mt-[4px]"><MdiBtn k="min" /><MdiBtn k="restore" /><div className="w-[2px]" /><MdiBtn k="x" /></div>
          </div>

          {/* tool bars */}
          <div className="flex h-[30px] shrink-0 border-b border-t border-b-[#bcb7b0] border-t-white">
            <Bar className="w-[162px]"><Btn><NewFile /></Btn><Btn><OpenFolder /></Btn><Btn><Save /></Btn><Btn><SaveAll /></Btn><Sep /><Btn><Printer /></Btn></Bar>
            <Bar className="w-[185px]"><Btn><Cut /></Btn><Btn><Copy /></Btn><Btn><Paste /></Btn><Btn><Del /></Btn><Sep /><Btn><Undo /></Btn>
              <svg width="8" height="6" viewBox="0 0 8 6" className="ml-[13px] block shrink-0" fill="none" stroke="#000" strokeWidth="1.300"><path d="M.5.500L3 3 .5 5.500M4.500.500L7 3 4.500 5.500" /></svg></Bar>
            <Bar className="w-[220px]">
              <Btn><Lens><path d="M8 5.500h5M10.500 3v5" stroke="#143a9a" strokeWidth="1.500" /></Lens></Btn>
              <Btn><Lens><path d="M8 5.500h5" stroke="#143a9a" strokeWidth="1.500" /></Lens></Btn>
              <Btn><LensFit /></Btn><Btn><LensFit sel /></Btn>
              <Btn><Lens grey><path d="M7 3.500h7v4H7z" fill="#8f8b86" /></Lens></Btn>
              <Btn><Refresh /></Btn><Sep />
              <div className="flex h-[26px] w-[28px] items-center justify-center rounded-[3px] border border-[#7f7b75] bg-[#cdc7c2]"><Hammer /></div>
            </Bar>
            <Bar className="w-[125px]"><Btn><Cascade /></Btn><Btn><TileH /></Btn><Btn><TileV /></Btn><Btn><WinPair /></Btn></Bar>
            <Bar className="w-[67px]"><Btn><Wrench /></Btn><Btn><HelpArrow /></Btn></Bar>
            <Bar className="w-[96px]"><Btn><Play /></Btn><Btn><Sigma /></Btn><Btn><Telescope /></Btn></Bar>
            <div className="flex items-center border-l border-white pl-[3px]"><Grip /><Btn><Bulb /></Btn></div>
          </div>

          {/* main area */}
          <div className="flex h-[601px] shrink-0">
            <div className="flex w-[277px] shrink-0 flex-col pl-px">
              <div className="flex h-[19px] shrink-0 items-start justify-between border border-[#c9c4be] pl-[3px] pr-px">
                <span className="leading-[16px]">Design</span><div className="pt-[4px]"><MiniSet /></div>
              </div>
              <div className="flex h-[296px] shrink-0 border-b border-[#b5b0a9]">
                <ToolCol className="w-[28px] shrink-0 border-r border-[#cfcac4] pr-px pt-px" items={[<NewSource />, <AddSource />, <AddCopy />, "-", <Chips />, "-", <RemoveDoc />, "-", <ChipCheck />, <PageCheck />, "-", <TileV />]} />
                <div className="flex w-[248px] shrink-0 flex-col">
                  <div className="flex h-[25px] shrink-0 items-center overflow-hidden whitespace-nowrap pl-[4px] leading-[25px]">
                    <span className="w-[31px] shrink-0">View</span><Radio on />
                    <div className="ml-[6px] shrink-0"><ChipBlue /></div>
                    <span className="ml-[4px] w-[81px] shrink-0">Implementat</span>
                    <div className="ml-[4px]"><Radio /></div>
                    <div className="ml-[6px]"><SimIcon /></div>
                    <span className="ml-[4px] w-[48px] shrink-0">Simulat</span>
                  </div>
                  <div className={"flex min-h-0 flex-1 flex-col overflow-hidden border-b-0 " + frame}>
                    <div className={"h-[26px] shrink-0 pl-[4px] leading-[25px] " + header}>Hierarchy</div>
                    <Row a={<Project />} text="PISO" tight first />
                    <Row a={<ChipSm />} text="xc3s50-5pq208" tight kind="-" last="self" />
                    <Row level={1} kind="+" a={<Vhd />} b={<Chips top="#1ea32c" low="#4a5fa8" fillTop="#bfe8c6" fillLow="#b9c3dc" />} text="piso_rtl - Behavioral (piso" sel last="self root" />
                    <div className="flex-1" />
                    <div className="flex h-[15px] shrink-0 bg-[#d6ccc4]">
                      <ArrowBtn dir="left" className="h-[15px] w-[15px]" />
                      <div className="flex w-[172px] items-center justify-center gap-[2px] border border-[#85817a] bg-[linear-gradient(180deg,#fbfaf9,#e6e2dd)]"><i className="h-[7px] w-px bg-[#aaa]" /><i className="h-[7px] w-px bg-[#aaa]" /><i className="h-[7px] w-px bg-[#aaa]" /></div>
                      <div className="flex-1 border-y border-[#a39e97]" />
                      <ArrowBtn dir="right" className="h-[15px] w-[15px]" />
                    </div>
                  </div>
                </div>
              </div>
              <div className="flex h-[6px] shrink-0 items-center justify-center pr-[2px]"><div className="h-[4px] w-[40px] bg-[repeating-linear-gradient(90deg,#b3afa9_0_1px,#fbfaf9_1px_2px)]" /></div>
              <div className="flex h-[253px] shrink-0 border-b border-[#b5b0a9]">
                <ToolCol className="w-[28px] shrink-0 border-r border-t border-[#cfcac4] border-t-white pr-px" items={[<Play />, "-", <ProcChip mark="down" />, <ProcChip mark="x" grey />, "-", <ProcChip mark="v" grey />, "-", <TileV />]} />
                <div className="flex w-[248px] shrink-0 flex-col">
                  <div className="flex h-[32px] shrink-0 items-center pl-[6px] leading-[32px]"><Cycle /><span className="pl-[10px]">No Processes Running</span></div>
                  <div className={"flex min-h-0 flex-1 border-b-0 " + frame}>
                    <div className="flex w-[229px] shrink-0 flex-col overflow-hidden">
                      <div className={"flex h-[26px] shrink-0 items-center justify-between pl-[4px] " + header}><span className="leading-[25px]">Processes: piso_rtl - Behavioral</span><HDiv /></div>
                      <Row a={<Sigma />} text="Design Summary/Reports" first />
                      <Row kind="+" a={<Tools />} text="Design Utilities" />
                      <Row kind="+" a={<Tools />} text="User Constraints" />
                      <Row kind="-" a={<Cycle />} b={<Warn />} text="Synthesize - XST" />
                      <Row level={1} a={<SchematicIcon dim />} text="View RTL Schematic" sel />
                      <Row level={1} a={<SchematicIcon plain />} text="View Technology Sc..." />
                      <Row level={1} a={<Cycle />} b={<Ok />} text="Check Syntax" />
                      <Row level={1} a={<Cycle />} text="Generate Post-Synt..." last="self" />
                      <Row kind="+" a={<Cycle />} text="Implement Design" />
                      <Row a={<Cycle />} text="Generate Programmin..." />
                      <Row kind="+" a={<ConfDev />} text="Configure Target Device" />
                    </div>
                    <div className="flex w-[15px] shrink-0 flex-col bg-[#d6ccc4]">
                      <ArrowBtn dir="up" className="h-[15px] w-[15px]" />
                      <div className="flex h-[156px] shrink-0 flex-col items-center justify-center gap-[2px] border border-[#85817a] bg-[linear-gradient(90deg,#fbfaf9,#e6e2dd)]"><i className="h-px w-[7px] bg-[#aaa]" /><i className="h-px w-[7px] bg-[#aaa]" /><i className="h-px w-[7px] bg-[#aaa]" /></div>
                      <div className="flex-1 border-x border-[#a39e97]" />
                      <ArrowBtn dir="down" className="h-[15px] w-[15px]" />
                    </div>
                  </div>
                </div>
              </div>
              <div className="flex h-[26px] shrink-0 items-start whitespace-nowrap pt-px">
                <div className={"flex h-[23px] w-[73px] shrink-0 items-center pl-[4px] " + tabOff}><Arrow3D s={16} /><span className="pl-[12px] leading-[21px] -mt-px">Start</span></div>
                <div className={"flex h-[25px] w-[85px] shrink-0 items-center pl-[5px] " + tabOn}><DesignTab /><span className="pl-[11px] leading-[22px]">Design</span></div>
                <div className={"flex h-[23px] w-[71px] shrink-0 items-center pl-[8px] " + tabOff}><div className="-mt-px"><FilesIcon /></div><span className="-mt-px pl-[10px] leading-[21px]">Files</span></div>
                <div className={"flex h-[23px] w-[15px] shrink-0 items-center overflow-hidden pl-[7px] " + tabOff}><FilesIcon y /></div>
                <ArrowBtn dir="left" grey className="h-[24px] w-[14px]" />
                <ArrowBtn dir="right" className="ml-[2px] h-[24px] w-[15px]" />
              </div>
            </div>

            <div className="flex w-[7px] shrink-0 flex-col items-center pt-[279px]"><div className="h-[40px] w-[4px] bg-[repeating-linear-gradient(180deg,#b3afa9_0_1px,#fbfaf9_1px_2px)]" /></div>

            <div className="flex min-w-0 flex-1 flex-col">
              <div className="flex h-[572px] shrink-0 border-b border-[#aaa59e]">
                <ToolCol className="w-[28px] shrink-0 border-l border-white pr-px" items={[<PointerSel />, <div className="flex h-[26px] w-[26px] shrink-0 items-center justify-center rounded-[3px] border border-[#7f7b75] bg-[#cdc7c2]"><ZoomBox /></div>, "-", <Stars />, "-", <Cone />, <Cone flip />, "-", <GWin />, <GPair />, <GChip />, <GChip x />, "-", <GGate />, <AFrame />, "-", <GUp />, <GArrow />, <GArrow flip />, <GHist />, "-", <GTwo />, <GreenTag />]} />
                <div className="flex-1 overflow-hidden border-x border-t border-[#aaa59e] bg-[#efebe7] px-px"><div className="bg-white"><Schematic /></div></div>
              </div>
              <div className="flex h-[27px] shrink-0 items-start whitespace-nowrap pt-px">
                <div className={"flex h-[25px] w-[309px] shrink-0 items-center justify-between border-l border-l-[#8f8a84] pb-px pl-[4px] pr-[9px] " + tabOff}><DocIcon /><span className="-ml-[3px] leading-[22px]">piso_rtl.vhd</span><CloseX /></div>
                <div className={"flex h-[25px] w-[312px] shrink-0 items-center justify-between pb-px pl-[6px] pr-[10px] " + tabOff}><Sigma /><span className="-ml-[3px] leading-[22px]">Design Summary (Synthesized)</span><CloseX /></div>
                <div className={"flex h-[27px] w-[309px] shrink-0 items-center justify-between pl-[5px] pr-[9px] " + tabOn}><SchematicIcon /><span className="pt-px leading-[24px]">piso_rtl (RTL1)</span><div className="pt-px"><CloseX /></div></div>
                <div className="h-px flex-1 bg-[#9a958e]" />
              </div>
            </div>
          </div>

          {/* bottom panel */}
          <div className="flex h-[5px] shrink-0 items-start justify-center pr-[2px]"><div className="h-[4px] w-[40px] bg-[repeating-linear-gradient(90deg,#b3afa9_0_1px,#fbfaf9_1px_2px)]" /></div>
          <div className="ml-px flex h-[19px] shrink-0 items-start justify-between border border-[#c9c4be] pl-[3px] pr-px"><span className="leading-[16px]">View by Category</span><div className="pt-[4px]"><MiniSet /></div></div>
          <div className="flex h-[25px] shrink-0 text-black">
            <span className="w-[760px] shrink-0 text-center font-bold leading-[20px]">Design Objects of Top Level Block</span>
            <span className="w-[770px] shrink-0 text-center font-bold leading-[20px]">Properties: (No Selection)</span>
          </div>
          <div className="flex h-[77px] shrink-0 pl-[4px]">
            <div className="flex gap-[6px]">
              <Table title="Instances">
                <div className="flex h-[18px] items-center"><svg width="20" height="18" className="block shrink-0" fill="none"><path d="M10.500 2v8M10 10.500h9" stroke="#8f8b86" strokeDasharray="1 1" /></svg><div className="ml-[3px]"><RedTree /></div><span className="pl-[6px] leading-[18px]">piso_rtl</span></div>
              </Table>
              <Table title="Pins" />
              <Table title="Signals" />
            </div>
            <div className="flex w-[15px] shrink-0 items-center justify-center"><div className="h-[40px] w-[4px] bg-[repeating-linear-gradient(180deg,#b3afa9_0_1px,#fbfaf9_1px_2px)]" /></div>
            <div className={"flex w-[751px] shrink-0 flex-col " + frame}>
              <div className={"flex h-[26px] shrink-0 items-center " + header}>
                <div className="flex w-[372px] items-center justify-between pl-[4px] pr-[8px]"><span className="leading-[25px]">Name</span><Caret up /></div><HDiv />
                <div className="flex flex-1 items-center justify-between pl-[4px]"><span className="leading-[25px]">Value</span><HDiv /></div>
              </div>
            </div>
          </div>
          <div className="flex h-[5px] shrink-0" />
          <div className="ml-px flex h-[26px] shrink-0 items-start whitespace-nowrap">
            <div className={"flex h-[23px] w-[93px] shrink-0 items-center pb-[2px] pl-[4px] " + tabOff}><ConsoleIcon /><span className="pl-[12px] leading-[19px]">Console</span></div>
            <div className={"flex h-[23px] w-[80px] shrink-0 items-center pb-[2px] pl-[6px] " + tabOff}><ErrIcon /><span className="pl-[11px] leading-[19px]">Errors</span></div>
            <div className={"flex h-[23px] w-[102px] shrink-0 items-center pb-[2px] pl-[6px] " + tabOff}><Warn /><span className="pl-[11px] leading-[19px]">Warnings</span></div>
            <div className={"flex h-[23px] w-[169px] shrink-0 items-center pb-[2px] pl-[6px] " + tabOff}><FindIcon /><span className="pl-[11px] leading-[19px]">Find in Files Results</span></div>
            <div className={"flex h-[25px] w-[156px] shrink-0 items-center pl-[5px] " + tabOn}><GridIcon /><span className="pl-[11px] leading-[22px]">View by Category</span></div>
            <div className="h-px flex-1 bg-[#9a958e]" />
          </div>
          <div className="flex flex-1 items-center justify-end pb-px pr-[4px]"><span className="leading-[20px]">[912,372]</span></div>
        </div>
      </div>
    </div>
  );
}
